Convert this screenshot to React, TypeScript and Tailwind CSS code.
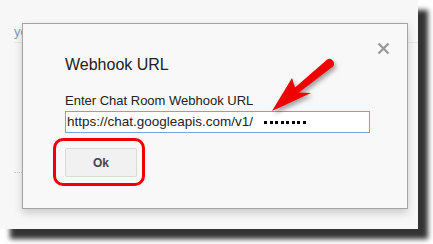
import React from "react";

export default function App() {
  const font = { fontFamily: '"Liberation Sans", Arial, sans-serif' };
  return (
    <div className="w-[433px] h-[244px] bg-white overflow-hidden relative" style={font}>
      {/* screenshot frame */}
      <div className="relative w-[418px] h-[229px] bg-[#f7f7f7] shadow-[10px_10px_5px_rgba(0,0,0,0.8)]">
        {/* background page content */}
        <div className="pl-[14px] pt-[24px] flex flex-col">
          <div className="text-[13px] leading-[16px] text-[#8b9bb4] h-[18px]">yo</div>
          <div className="h-px bg-[#e6e6e6] w-[404px]"></div>
          <div className="mt-[129px] w-[8px] border-t border-dotted border-[#c8c8c8]"></div>
        </div>

        {/* dialog */}
        <div className="absolute left-[22px] top-[23px] w-[386px] h-[186px] bg-[#f8f8f8] border border-[#a3a3a3] shadow-[0_4px_8px_rgba(0,0,0,0.18)]">
          <div className="absolute right-[17px] top-[18px]">
            <svg width="13" height="13" viewBox="0 0 13 13">
              <path d="M1.5 1.5 L11.5 11.5 M11.5 1.5 L1.5 11.5" stroke="#9a9a9a" strokeWidth="2.4" />
            </svg>
          </div>
          <div className="pl-[42px] pt-[31px] flex flex-col">
            <div className="text-[16px] leading-[20px] text-[#222]">Webhook URL</div>
            <div className="mt-[18px] text-[13px] leading-[16px] text-[#222]">Enter Chat Room Webhook URL</div>
            <div className="mt-[2px] w-[305px] h-[22px] bg-white border border-[#7aa3e6] flex items-center pl-[1px]">
              <span className="w-[186px] overflow-hidden whitespace-nowrap text-[13.5px] text-[#222] leading-[18px]">
                https://chat.googleapis.com/v1/s
              </span>
              <div className="ml-[11px] flex gap-[2.5px] items-center">
                {[0, 1, 2, 3, 4, 5, 6, 7].map((i) => (
                  <span key={i} className="w-[3px] h-[3px] bg-black inline-block"></span>
                ))}
              </div>
            </div>
            <button className="mt-[15px] w-[72px] h-[29px] bg-[#f1f1f1] border border-[#dadada] rounded-[2px] text-[12px] font-bold text-[#444]">
              Ok
            </button>
          </div>
        </div>

        {/* annotation: red rounded box */}
        <div className="absolute left-[53px] top-[138px] w-[92px] h-[48px] border-[3px] border-[#ee0000] rounded-[10px]"></div>

        {/* annotation: red arrow */}
        <svg
          className="absolute left-0 top-0 drop-shadow-[2px_3px_2px_rgba(0,0,0,0.35)]"
          width="418"
          height="229"
          viewBox="0 0 418 229"
        >
          <path
            d="M272 111 L292 78 L295 87.5 L327.2 59.5 A4.6 4.6 0 0 1 332.9 66.5 L299 92.5 L311 93 Z"
            fill="#f00000"
          />
        </svg>
      </div>
    </div>
  );
}
